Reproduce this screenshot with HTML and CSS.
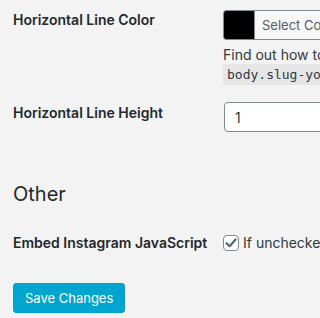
FILE: index.html
```html
<!DOCTYPE html>
<html lang="en">
<head>
    <meta charset="UTF-8">
    <meta name="viewport" content="width=device-width, initial-scale=1.0">
    <title>Settings</title>
    <link rel="stylesheet" href="styles.css">
</head>
<body>

    <div class="wrap">
        <div class="row row-color">
            <div class="label">Horizontal Line Color</div>
            <div class="field">
                <button class="color-picker">
                    <span class="swatch"></span>
                    <span class="picker-text">Select Color</span>
                </button>
                <p class="description">Find out how to change the color of every line on the page</p>
                <code>body.slug-your-page hr { border-color: #000; }</code>
            </div>
        </div>

        <div class="row row-height">
            <div class="label">Horizontal Line Height</div>
            <div class="field">
                <input type="text" class="text-input" value="1">
            </div>
        </div>

        <h2 class="section-title">Other</h2>

        <div class="row row-embed">
            <div class="label">Embed Instagram JavaScript</div>
            <div class="field">
                <label class="check">
                    <span class="checkbox">
                        <svg width="14" height="14" viewBox="0 0 14 14"><path d="M2.5 7.2 L5.6 10.2 L11.6 3.4" fill="none" stroke="#50667a" stroke-width="2.2" stroke-linecap="round" stroke-linejoin="round"/></svg>
                    </span>
                    If unchecked, the Instagram embed script will not be loaded
                </label>
            </div>
        </div>

        <div class="submit">
            <button class="button-primary">Save Changes</button>
        </div>
    </div>

</body>
</html>
```

FILE: styles.css
```css
html, body {
    margin: 0;
    padding: 0;
    background-color: #f3f3f3;
    overflow: hidden;
}

body {
    font-family: Inter, "Noto Sans", sans-serif;
    font-size: 14px;
    color: #32373c;
}

.wrap {
    padding: 0 0 0 13px;
}

.row {
    display: flex;
    align-items: flex-start;
}

.label {
    width: 210px;
    flex-shrink: 0;
    font-weight: 600;
    color: #23282d;
    line-height: 20px;
}

.field {
    white-space: nowrap;
}

/* colour picker */
.row-color {
    padding-top: 9px;
}

.row-color .label {
    padding-top: 1px;
}

.color-picker {
    display: flex;
    align-items: stretch;
    height: 30px;
    padding: 0;
    margin: 1px 0 0 0;
    border: 1px solid #7e8993;
    border-radius: 3px;
    background-color: #f7f7f7;
    font-family: inherit;
    overflow: hidden;
}

.swatch {
    width: 30px;
    background-color: #000;
    border-right: 1px solid #7e8993;
}

.picker-text {
    padding: 0 8px 0 7px;
    line-height: 28px;
    font-size: 13px;
    color: #555d66;
}

.description {
    margin: 6px 0 0 0;
    line-height: 18px;
    font-size: 14px;
}

code {
    display: block;
    width: fit-content;
    padding: 2px 4px;
    font-family: "DejaVu Sans Mono", monospace;
    font-size: 13px;
    line-height: 17px;
    background-color: #e6e6e6;
    color: #32373c;
}

/* line height */
.row-height {
    padding-top: 17px;
}

.row-height .label {
    padding-top: 1px;
}

.text-input {
    box-sizing: border-box;
    width: 120px;
    height: 30px;
    margin: 0 0 0 1px;
    padding: 0 10px;
    border: 1px solid #7e8993;
    border-radius: 4px;
    background-color: #fff;
    font-family: inherit;
    font-size: 14px;
    color: #32373c;
}

.section-title {
    margin: 49px 0 0 0;
    font-size: 20px;
    font-weight: 400;
    line-height: 26px;
    color: #23282d;
}

/* embed row */
.row-embed {
    padding-top: 26px;
}

.check {
    display: flex;
    align-items: center;
    gap: 4px;
    line-height: 20px;
}

.checkbox {
    box-sizing: border-box;
    width: 16px;
    height: 16px;
    display: flex;
    align-items: center;
    justify-content: center;
    border: 1px solid #7e8993;
    border-radius: 4px;
    background-color: #fff;
}

.submit {
    padding-top: 30px;
}

.button-primary {
    height: 30px;
    padding: 0 11px;
    border: 1px solid #00a0d2;
    border-radius: 3px;
    background-color: #00a6cf;
    color: #fff;
    font-family: inherit;
    font-size: 13px;
    font-weight: 400;
    cursor: pointer;
}
```
